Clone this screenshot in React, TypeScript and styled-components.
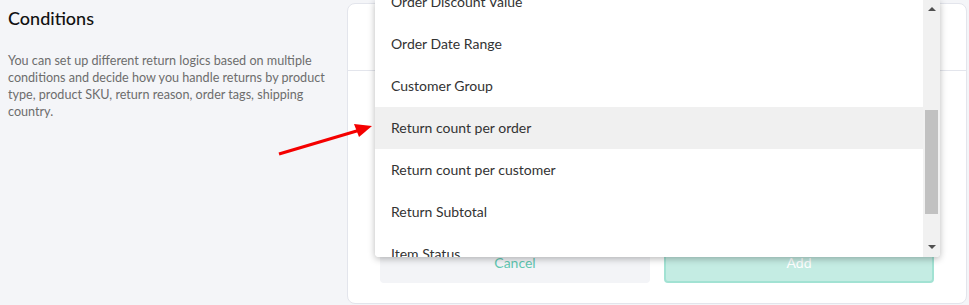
import { createGlobalStyle } from 'styled-components';
import styled from 'styled-components';

const GlobalStyle = createGlobalStyle`
  html, body {
    margin: 0;
    padding: 0;
    background: #f4f5f8;
    font-family: 'Lato', 'Open Sans', sans-serif;
  }
  * { box-sizing: border-box; }
`;

const Page = styled.div`
  position: relative;
  width: 969px;
  height: 305px;
  display: flex;
  flex-direction: row;
  overflow: hidden;
`;

const Intro = styled.div`
  width: 347px;
  flex-shrink: 0;
  padding: 7px 8px 0 8px;
`;

const Title = styled.h2`
  margin: 0;
  font-size: 18px;
  font-weight: 500;
  color: #111;
  line-height: 22px;
`;

const Description = styled.p`
  margin: 23px 0 0 0;
  font-size: 12.6px;
  line-height: 17px;
  color: #6d6d6d;
`;

const Card = styled.div`
  position: relative;
  flex: 1;
  margin: 3px 2px 1px 0;
  background: #fff;
  border: 1px solid #e3e5ec;
  border-radius: 8px;
  display: flex;
  flex-direction: column;
`;

const CardHeader = styled.div`
  height: 67px;
  border-bottom: 1px solid #e3e5ec;
`;

const CardBody = styled.div`
  flex: 1;
  display: flex;
  align-items: flex-end;
  padding: 0 32px 20px 32px;
`;

const Actions = styled.div`
  width: 100%;
  display: grid;
  grid-template-columns: 1fr 1fr;
  gap: 14px;
`;

const Button = styled.button<{ $primary?: boolean }>`
  height: 42px;
  border-radius: 4px;
  font-family: inherit;
  font-size: 14px;
  cursor: pointer;
  border: 2px solid ${(p) => (p.$primary ? '#a2e2d3' : '#f3f4f7')};
  background: ${(p) => (p.$primary ? '#c4ece3' : '#f3f4f7')};
  color: ${(p) => (p.$primary ? '#ffffff' : '#5fc7b1')};
`;

const Menu = styled.div`
  position: absolute;
  top: -4px;
  left: 27px;
  width: 565px;
  height: 257px;
  background: #fff;
  border-radius: 0 0 4px 4px;
  box-shadow: 0 2px 7px rgba(0, 0, 0, 0.28);
  display: flex;
  overflow: hidden;
  z-index: 2;
`;

const Options = styled.ul`
  flex: 1;
  list-style: none;
  margin: -19px 0 0 0;
  padding: 0;
`;

const Option = styled.li<{ $active?: boolean }>`
  height: 42px;
  display: flex;
  align-items: center;
  padding: 0 0 2px 16px;
  font-size: 14px;
  color: #333;
  background: ${(p) => (p.$active ? '#f0f0f0' : '#fff')};
`;

const Scrollbar = styled.div`
  width: 17px;
  background: #f1f1f1;
  display: flex;
  flex-direction: column;
  align-items: center;
  padding: 7px 0 8px;
`;

const ScrollArrow = styled.div<{ $down?: boolean }>`
  width: 0;
  height: 0;
  border-left: 4px solid transparent;
  border-right: 4px solid transparent;
  ${(p) =>
    p.$down
      ? 'border-top: 4px solid #505050;'
      : 'border-bottom: 4px solid #505050;'}
`;

const Track = styled.div`
  flex: 1;
  width: 100%;
  padding: 99px 2px 31px 2px;
`;

const Thumb = styled.div`
  height: 100%;
  background: #c1c1c1;
`;

const Pointer = styled.svg`
  position: absolute;
  left: 0;
  top: 0;
  pointer-events: none;
  z-index: 3;
`;

const options = [
  'Order Discount Value',
  'Order Date Range',
  'Customer Group',
  'Return count per order',
  'Return count per customer',
  'Return Subtotal',
  'Item Status',
];

const App = () => {
  return (
    <>
      <GlobalStyle />
      <Page>
        <Intro>
          <Title>Conditions</Title>
          <Description>
            You can set up different return logics based on multiple
            <br />
            conditions and decide how you handle returns by product
            <br />
            type, product SKU, return reason, order tags, shipping
            <br />
            country.
          </Description>
        </Intro>

        <Card>
          <CardHeader />
          <CardBody>
            <Actions>
              <Button>Cancel</Button>
              <Button $primary>Add</Button>
            </Actions>
          </CardBody>

          <Menu>
            <Options>
              {options.map((o) => (
                <Option key={o} $active={o === 'Return count per order'}>
                  {o}
                </Option>
              ))}
            </Options>
            <Scrollbar>
              <ScrollArrow />
              <Track>
                <Thumb />
              </Track>
              <ScrollArrow $down />
            </Scrollbar>
          </Menu>
        </Card>

        <Pointer width="969" height="305" viewBox="0 0 969 305">
          <line x1="279" y1="154" x2="360" y2="130" stroke="#f40000" strokeWidth="3" />
          <polygon points="372,126 354,124 359,137" fill="#f40000" />
        </Pointer>
      </Page>
    </>
  );
};

export default App;
